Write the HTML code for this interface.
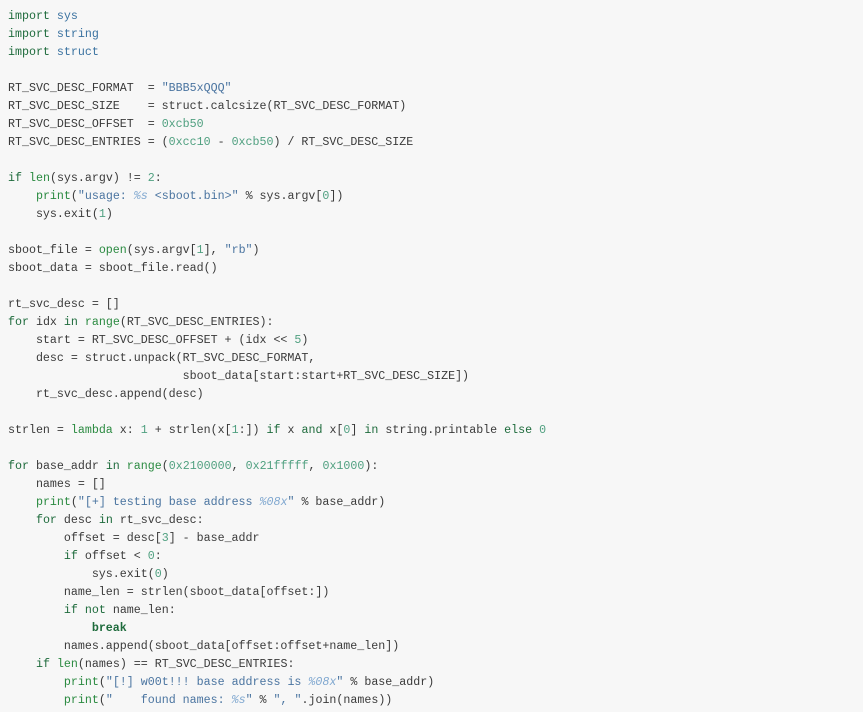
<!DOCTYPE html>
<html><head><style>
html,body{margin:0;padding:0;background:#f7f7f7;width:863px;height:712px;overflow:hidden}
pre{margin:0;padding:8px 8px;font-family:"Liberation Mono",monospace;font-size:11.65px;line-height:18px;color:#3a3a3a;}
.k{color:#1e6b3c}.n{color:#3a72a0}.s{color:#4a74a0}.m{color:#50a080}.b{color:#2a8a40}.i{color:#80a8d0;font-style:italic}.kb{color:#1e6b3c;font-weight:bold}
</style></head><body><pre><span class="k">import</span> <span class="n">sys</span>
<span class="k">import</span> <span class="n">string</span>
<span class="k">import</span> <span class="n">struct</span>

RT_SVC_DESC_FORMAT  = <span class="s">"BBB5xQQQ"</span>
RT_SVC_DESC_SIZE    = struct.calcsize(RT_SVC_DESC_FORMAT)
RT_SVC_DESC_OFFSET  = <span class="m">0xcb50</span>
RT_SVC_DESC_ENTRIES = (<span class="m">0xcc10</span> - <span class="m">0xcb50</span>) / RT_SVC_DESC_SIZE

<span class="k">if</span> <span class="b">len</span>(sys.argv) != <span class="m">2</span>:
    <span class="b">print</span>(<span class="s">"usage: </span><span class="i">%s</span><span class="s"> &lt;sboot.bin&gt;"</span> % sys.argv[<span class="m">0</span>])
    sys.exit(<span class="m">1</span>)

sboot_file = <span class="b">open</span>(sys.argv[<span class="m">1</span>], <span class="s">"rb"</span>)
sboot_data = sboot_file.read()

rt_svc_desc = []
<span class="k">for</span> idx <span class="k">in</span> <span class="b">range</span>(RT_SVC_DESC_ENTRIES):
    start = RT_SVC_DESC_OFFSET + (idx &lt;&lt; <span class="m">5</span>)
    desc = struct.unpack(RT_SVC_DESC_FORMAT,
                         sboot_data[start:start+RT_SVC_DESC_SIZE])
    rt_svc_desc.append(desc)

strlen = <span class="b">lambda</span> x: <span class="m">1</span> + strlen(x[<span class="m">1</span>:]) <span class="k">if</span> x <span class="k">and</span> x[<span class="m">0</span>] <span class="k">in</span> string.printable <span class="k">else</span> <span class="m">0</span>

<span class="k">for</span> base_addr <span class="k">in</span> <span class="b">range</span>(<span class="m">0x2100000</span>, <span class="m">0x21fffff</span>, <span class="m">0x1000</span>):
    names = []
    <span class="b">print</span>(<span class="s">"[+] testing base address </span><span class="i">%08x</span><span class="s">"</span> % base_addr)
    <span class="k">for</span> desc <span class="k">in</span> rt_svc_desc:
        offset = desc[<span class="m">3</span>] - base_addr
        <span class="k">if</span> offset &lt; <span class="m">0</span>:
            sys.exit(<span class="m">0</span>)
        name_len = strlen(sboot_data[offset:])
        <span class="k">if</span> <span class="k">not</span> name_len:
            <span class="kb">break</span>
        names.append(sboot_data[offset:offset+name_len])
    <span class="k">if</span> <span class="b">len</span>(names) == RT_SVC_DESC_ENTRIES:
        <span class="b">print</span>(<span class="s">"[!] w00t!!! base address is </span><span class="i">%08x</span><span class="s">"</span> % base_addr)
        <span class="b">print</span>(<span class="s">"    found names: </span><span class="i">%s</span><span class="s">"</span> % <span class="s">", "</span>.join(names))
</pre></body></html>
